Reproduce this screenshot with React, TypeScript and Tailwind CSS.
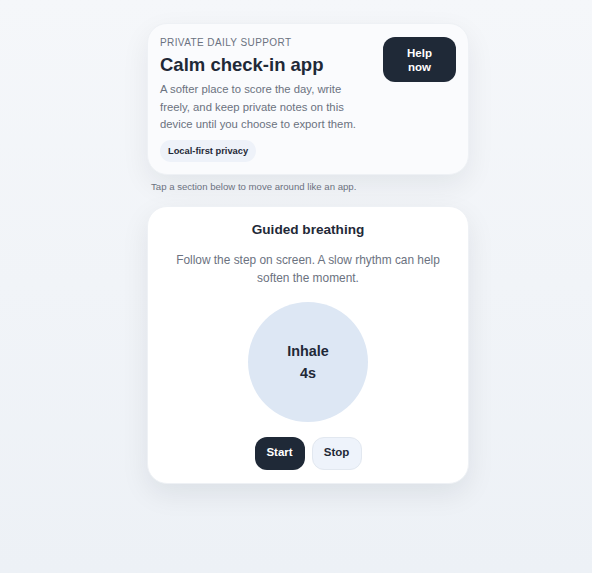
import { useState } from "react";

export default function App() {
  const [running, setRunning] = useState(false);

  return (
    <div
      className="min-h-[573px] bg-gradient-to-b from-[#f5f7fa] to-[#edf1f6] flex justify-center pl-[24px] pt-[23px]"
      style={{ fontFamily: '"Liberation Sans", Arial, sans-serif' }}
    >
      <div className="w-[322px] flex flex-col">
        {/* Header card */}
        <div className="bg-[#fafbfd] rounded-[20px] shadow-[0_10px_28px_rgba(15,23,42,0.07)] border border-[#eef1f5] px-[12px] pt-[13px] pb-[12px] flex gap-[12px]">
          <div className="flex-1">
            <div className="text-[10px] tracking-[0.04em] text-[#6b7280] leading-[12px]">PRIVATE DAILY SUPPORT</div>
            <h1 className="text-[18.5px] font-bold text-[#1f2937] leading-[22px] mt-[5px]">Calm check-in app</h1>
            <p className="text-[11.3px] text-[#6b7280] leading-[17.5px] mt-[5px]">
              A softer place to score the day, write freely, and keep private notes on this device until you choose to export them.
            </p>
            <span className="inline-block mt-[6px] bg-[#eef2f9] rounded-full px-[8px] py-[5px] text-[9.3px] font-bold text-[#1f2937] leading-[12px]">
              Local-first privacy
            </span>
          </div>
          <button className="self-start w-[73px] h-[45px] rounded-[12px] bg-[#1f2937] text-white text-[11.5px] font-bold leading-[14px]">
            Help
            <br />
            now
          </button>
        </div>

        <p className="text-[9.6px] text-[#6b7280] ml-[4px] mt-[6px] leading-[12px]">Tap a section below to move around like an app.</p>

        {/* Breathing card */}
        <div className="mt-[13px] bg-white rounded-[20px] shadow-[0_10px_28px_rgba(15,23,42,0.08)] border border-[#eef1f5] pt-[14px] pb-[13px] flex flex-col items-center">
          <h2 className="text-[13.6px] font-bold text-[#1f2937] leading-[17px]">Guided breathing</h2>
          <p className="mt-[13px] text-[11.9px] text-[#6b7280] leading-[18px] text-center w-[280px]">
            Follow the step on screen. A slow rhythm can help soften the moment.
          </p>
          <div className="mt-[15px] w-[120px] h-[120px] rounded-full bg-[#dde7f4] flex flex-col items-center justify-center text-[14.4px] font-bold text-[#1f2937] leading-[22px]">
            <span>Inhale</span>
            <span>4s</span>
          </div>
          <div className="mt-[15px] flex gap-[7px]">
            <button
              onClick={() => setRunning(true)}
              className="w-[50px] h-[33px] rounded-[12px] bg-[#1f2937] text-white text-[11.5px] font-bold"
            >
              Start
            </button>
            <button
              onClick={() => setRunning(false)}
              className={`w-[50px] h-[33px] rounded-[12px] border border-[#e2e8f0] text-[#1f2937] text-[11.5px] font-bold ${running ? "bg-[#f4f7fc]" : "bg-[#eef3fb]"}`}
            >
              Stop
            </button>
          </div>
        </div>
      </div>
    </div>
  );
}
